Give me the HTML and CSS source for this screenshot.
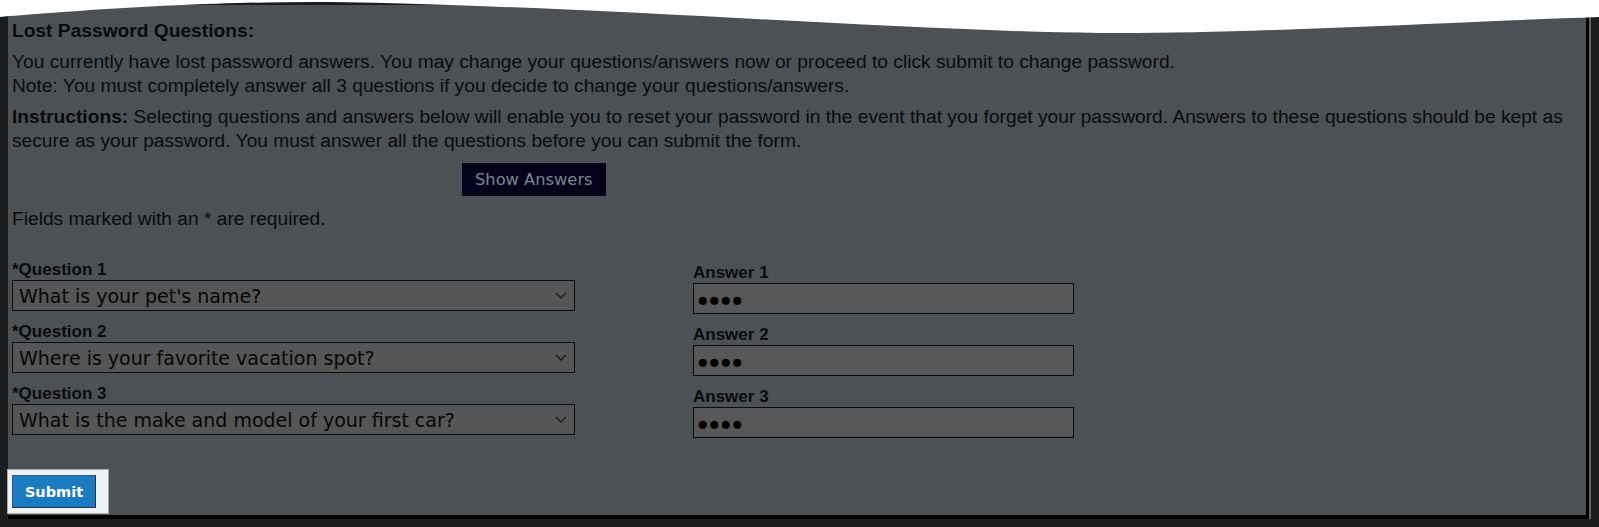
FILE: index.html
```html
<!DOCTYPE html>
<html lang="en">
<head>
<meta charset="utf-8">
<title>Lost Password Questions</title>
<link rel="stylesheet" href="styles.css">
</head>
<body>
<div class="screen">
  <div class="panel">
    <h2 class="title">Lost Password Questions:</h2>
    <p class="copy intro">You currently have lost password answers. You may change your questions/answers now or proceed to click submit to change password.<br>Note: You must completely answer all 3 questions if you decide to change your questions/answers.</p>
    <p class="copy instr"><b>Instructions:</b> Selecting questions and answers below will enable you to reset your password in the event that you forget your password. Answers to these questions should be kept as secure as your password. You must answer all the questions before you can submit the form.</p>
    <div class="show-row"><button class="show-btn" type="button">Show Answers</button></div>
    <p class="copy req">Fields marked with an * are required.</p>
    <div class="qa-grid">
      <div class="field">
        <label class="lbl">*Question 1</label>
        <div class="select-wrap">
          <select class="sel"><option>What is your pet's name?</option></select>
          <svg class="chev" width="12" height="7" viewBox="0 0 12 7"><path d="M1 1 L6 6 L11 1" fill="none" stroke="#1a1a1a" stroke-width="1.3"/></svg>
        </div>
      </div>
      <div class="field answer">
        <label class="lbl">Answer 1</label>
        <input class="ans" type="text" value="●●●●" readonly>
      </div>
      <div class="field">
        <label class="lbl">*Question 2</label>
        <div class="select-wrap">
          <select class="sel"><option>Where is your favorite vacation spot?</option></select>
          <svg class="chev" width="12" height="7" viewBox="0 0 12 7"><path d="M1 1 L6 6 L11 1" fill="none" stroke="#1a1a1a" stroke-width="1.3"/></svg>
        </div>
      </div>
      <div class="field answer">
        <label class="lbl">Answer 2</label>
        <input class="ans" type="text" value="●●●●" readonly>
      </div>
      <div class="field">
        <label class="lbl">*Question 3</label>
        <div class="select-wrap">
          <select class="sel"><option>What is the make and model of your first car?</option></select>
          <svg class="chev" width="12" height="7" viewBox="0 0 12 7"><path d="M1 1 L6 6 L11 1" fill="none" stroke="#1a1a1a" stroke-width="1.3"/></svg>
        </div>
      </div>
      <div class="field answer">
        <label class="lbl">Answer 3</label>
        <input class="ans" type="text" value="●●●●" readonly>
      </div>
    </div>
    <div class="submit-box"><button class="submit-btn" type="submit">Submit</button></div>
  </div>
  <div class="rail"></div>
</div>
<svg class="tear" width="1599" height="40" viewBox="0 0 1599 40">
  <path d="M0 0 L1599 0 L1599 17 C1450 22 1250 34 1100 33 C900 31 600 6 330 2 C200 1 60 12 0 17 Z" fill="#ffffff"/>
</svg>
</body>
</html>
```
FILE: styles.css
```css
html, body {
  margin: 0;
  padding: 0;
  background: #1c1c1c;
}
body {
  position: relative;
  width: 1599px;
  height: 527px;
  overflow: hidden;
  font-family: "Liberation Sans", Arial, sans-serif;
  color: #0b0b0b;
}
.screen {
  box-sizing: border-box;
  display: flex;
  align-items: flex-start;
  height: 527px;
  padding-top: 5px;
}
.panel {
  box-sizing: border-box;
  margin-left: 8px;
  width: 1581px;
  height: 514px;
  background: #4c5155;
  border-right: 3px solid #000;
  border-bottom: 4px solid #000;
  padding: 0 3px 0 4px;
}
.rail {
  width: 2px;
  height: 514px;
  background: #5e6265;
}
.title {
  margin: 15px 0 0;
  font-size: 19.2px;
  line-height: 22px;
  font-weight: bold;
}
.copy {
  margin: 6px 0 0;
  font-size: 19.2px;
  line-height: 24.5px;
}
.intro {
  margin-top: 7.5px;
}
.copy b {
  font-weight: bold;
}
.show-row {
  display: flex;
  margin-top: 9.5px;
  padding-left: 450px;
}
.show-btn {
  height: 33px;
  padding: 0 13px;
  border: 0;
  background: #03021a;
  color: #7a878f;
  font-family: "DejaVu Sans", sans-serif;
  font-size: 16.3px;
}
.req {
  margin-top: 10.5px;
}
.qa-grid {
  display: grid;
  grid-template-columns: 563px 381px;
  grid-template-rows: repeat(3, 51px);
  column-gap: 118px;
  row-gap: 11px;
  margin-top: 29px;
}
.field {
  display: flex;
  flex-direction: column;
  align-self: start;
}
.lbl {
  font-size: 17px;
  font-weight: bold;
  line-height: 20px;
}
.answer {
  margin-top: 2px;
}
.answer .lbl {
  line-height: 21px;
}
.select-wrap {
  position: relative;
  height: 31px;
}
.sel {
  appearance: none;
  -webkit-appearance: none;
  box-sizing: border-box;
  width: 563px;
  height: 31px;
  margin: 0;
  padding: 0 0 0 6px;
  border: 1px solid #0d0d0d;
  border-radius: 0;
  background: #555555;
  color: #060606;
  font-family: "DejaVu Sans", sans-serif;
  font-size: 19px;
  outline: none;
}
.chev {
  position: absolute;
  right: 8px;
  top: 12px;
  pointer-events: none;
}
.ans {
  box-sizing: border-box;
  width: 381px;
  height: 31px;
  margin: 0;
  padding: 2px 0 0 3px;
  border: 1px solid #0a0a0a;
  border-radius: 0;
  background: #575757;
  color: #000;
  font-family: "Liberation Sans", Arial, sans-serif;
  font-size: 19px;
  outline: none;
}
.submit-box {
  display: inline-flex;
  margin: 34px 0 0 -5px;
  padding: 5px 12px 5px 4px;
  border: 1px solid #a9acaf;
  background: #eef2f5;
}
.submit-btn {
  box-sizing: border-box;
  height: 33px;
  width: 84px;
  padding: 0;
  border: 1px solid #2a5f8c;
  border-right-color: #263545;
  border-bottom-color: #263545;
  background: #1b7bc0;
  color: #ffffff;
  font-family: "DejaVu Sans", sans-serif;
  font-weight: bold;
  font-size: 14.5px;
}
.tear {
  position: absolute;
  left: 0;
  top: 0;
  display: block;
}
```
